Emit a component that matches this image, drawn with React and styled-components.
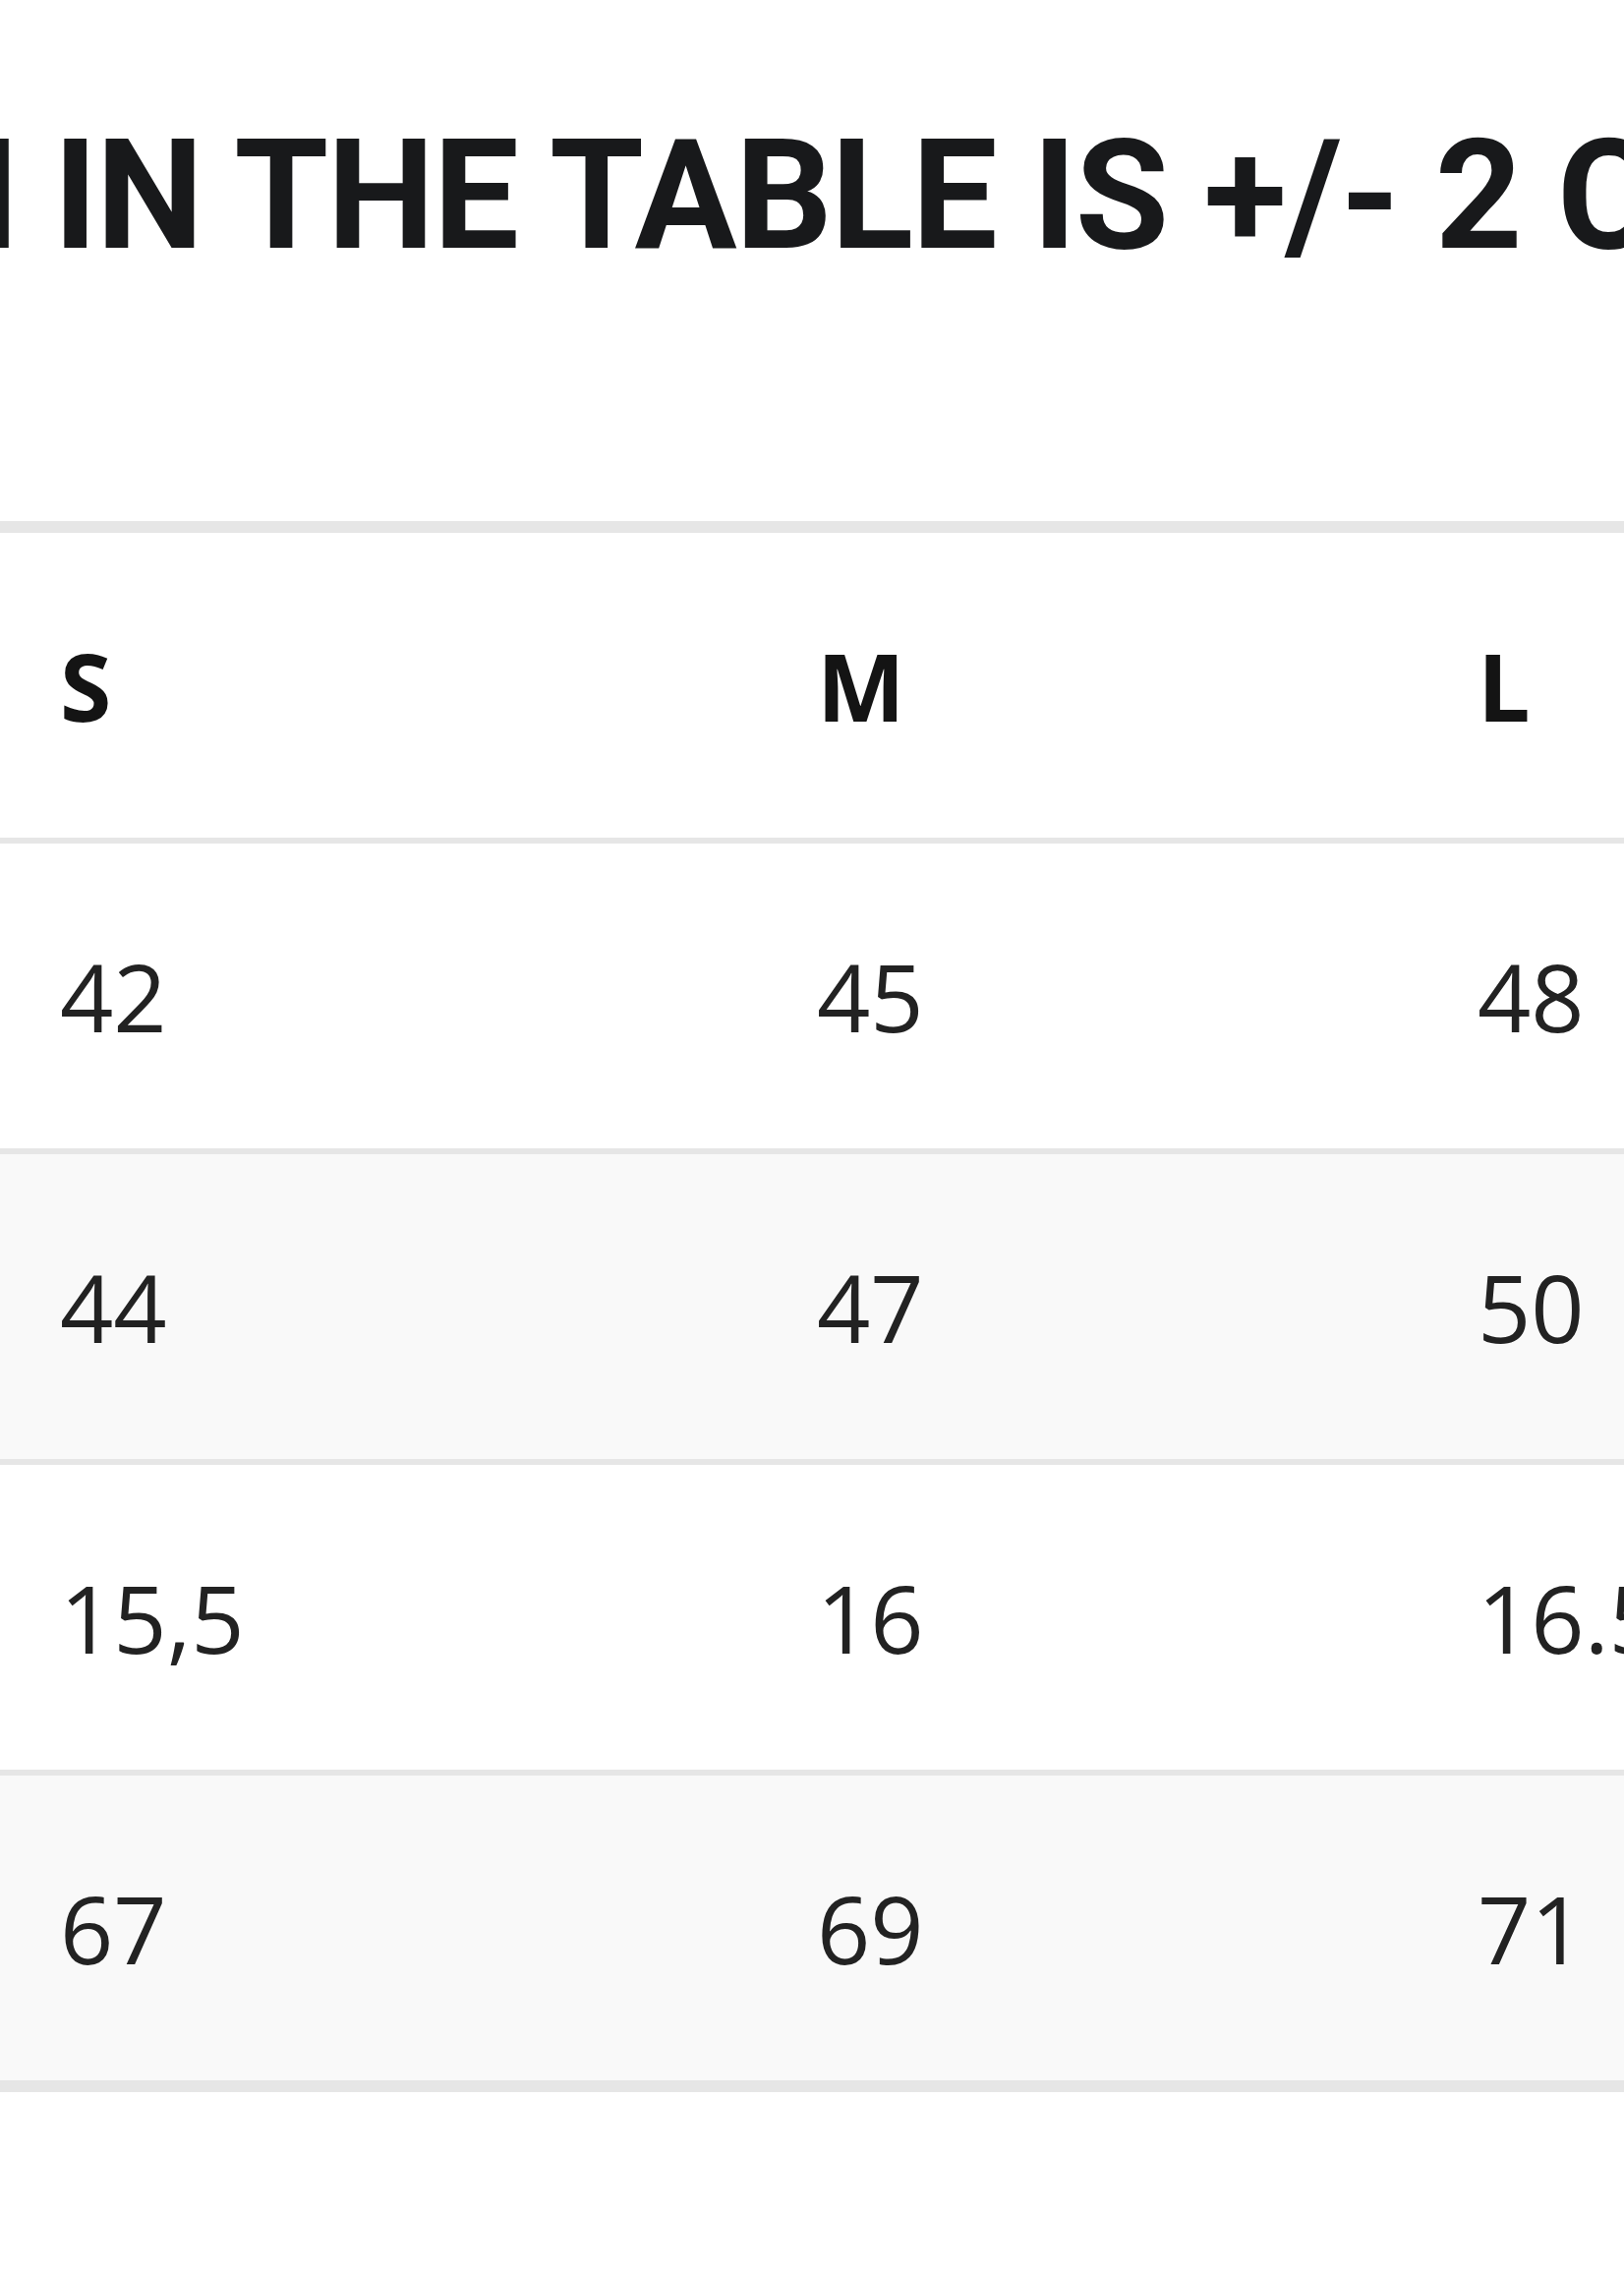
import React from "react";
import styled, { createGlobalStyle } from "styled-components";

const Global = createGlobalStyle`
  html, body { margin: 0; padding: 0; background: #ffffff; }
  body { width: 1652px; min-height: 2313px; overflow: hidden; }
`;

const Page = styled.main`
  width: 1652px;
  min-height: 2313px;
  padding-top: 122px;
  box-sizing: border-box;
  background: #ffffff;
`;

const Heading = styled.h2`
  margin: 0;
  display: grid;
  grid-template-columns: 54px 1fr;
  font-family: Roboto, "Liberation Sans", sans-serif;
  font-weight: 700;
  font-size: 155px;
  line-height: 155px;
  letter-spacing: -1.6px;
  color: #18191b;
  white-space: pre;
  overflow: hidden;
`;

const HeadPart = styled.span`
  display: flex;
  justify-content: ${(p) => (p.$end ? "flex-end" : "flex-start")};
  overflow: hidden;
  min-width: 0;
`;

const Table = styled.div`
  margin-top: 253px;
  border-top: 12px solid #e6e6e6;
  border-bottom: 12px solid #e6e6e6;
  display: flex;
  flex-direction: column;
`;

const Row = styled.div`
  display: grid;
  grid-template-columns: 770px 672px 1fr;
  height: 310px;
  background: ${(p) => (p.$shade ? "#f9f9f9" : "#ffffff")};
  border-bottom: ${(p) => (p.$last ? "none" : "6px solid #e6e6e6")};
`;

const Cell = styled.div`
  display: flex;
  align-items: center;
  padding-left: 61px;
  font-family: "Open Sans", "Liberation Sans", sans-serif;
  font-size: 95px;
  font-weight: ${(p) => (p.$head ? 700 : 400)};
  color: ${(p) => (p.$head ? "#141414" : "#222222")};
  white-space: nowrap;
  overflow: hidden;
`;

const header = ["S", "M", "L"];
const rows = [
  ["42", "45", "48"],
  ["44", "47", "50"],
  ["15,5", "16", "16.5"],
  ["67", "69", "71"],
];

export default function App() {
  return (
    <>
      <Global />
      <Page>
        <Heading>
          <HeadPart $end>{"THE DEVIATION "}</HeadPart>
          <HeadPart>{"IN THE TABLE IS +/- 2 CM"}</HeadPart>
        </Heading>
        <Table>
          <Row>
            {header.map((h) => (
              <Cell key={h} $head>
                {h}
              </Cell>
            ))}
          </Row>
          {rows.map((r, i) => (
            <Row key={i} $shade={i % 2 === 1} $last={i === rows.length - 1}>
              {r.map((c, j) => (
                <Cell key={j}>{c}</Cell>
              ))}
            </Row>
          ))}
        </Table>
      </Page>
    </>
  );
}
